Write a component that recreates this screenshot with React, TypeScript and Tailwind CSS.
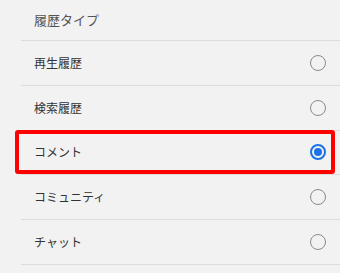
import React, { useState } from 'react';

const types = ['再生履歴', '検索履歴', 'コメント', 'コミュニティ', 'チャット'];

function Radio({ checked }: { checked: boolean }) {
  return (
    <span
      className={`flex h-[16px] w-[16px] items-center justify-center rounded-full ${
        checked ? 'border-2 border-[#1a73e8]' : 'border-[1.5px] border-[#8a8a8a]'
      }`}
    >
      {checked && <span className="h-[8px] w-[8px] rounded-full bg-[#1a73e8]" />}
    </span>
  );
}

export default function App() {
  const [selected, setSelected] = useState('コメント');

  return (
    <div
      className="h-[273px] w-[340px] overflow-hidden bg-[#f2f2f2]"
      style={{ fontFamily: '"Noto Sans CJK JP", "Noto Sans", sans-serif' }}
    >
      <div className="flex h-[40px] items-center pl-[34px] text-[13px] text-[#555]">履歴タイプ</div>
      <div className="ml-[21px] border-t border-[#dcdcdc]">
        {types.map((t) => (
          <div
            key={t}
            onClick={() => setSelected(t)}
            className="relative flex h-[44.8px] items-center justify-between border-b border-[#dcdcdc] pl-[13px] pr-[14px] text-[12px] text-[#333]"
          >
            <span>{t}</span>
            <Radio checked={selected === t} />
            {t === 'コメント' && (
              <div className="pointer-events-none absolute -top-[1px] left-[-6px] right-[5px] h-[44px] rounded-[3px] border-4 border-[#ff0000]" />
            )}
          </div>
        ))}
      </div>
    </div>
  );
}
